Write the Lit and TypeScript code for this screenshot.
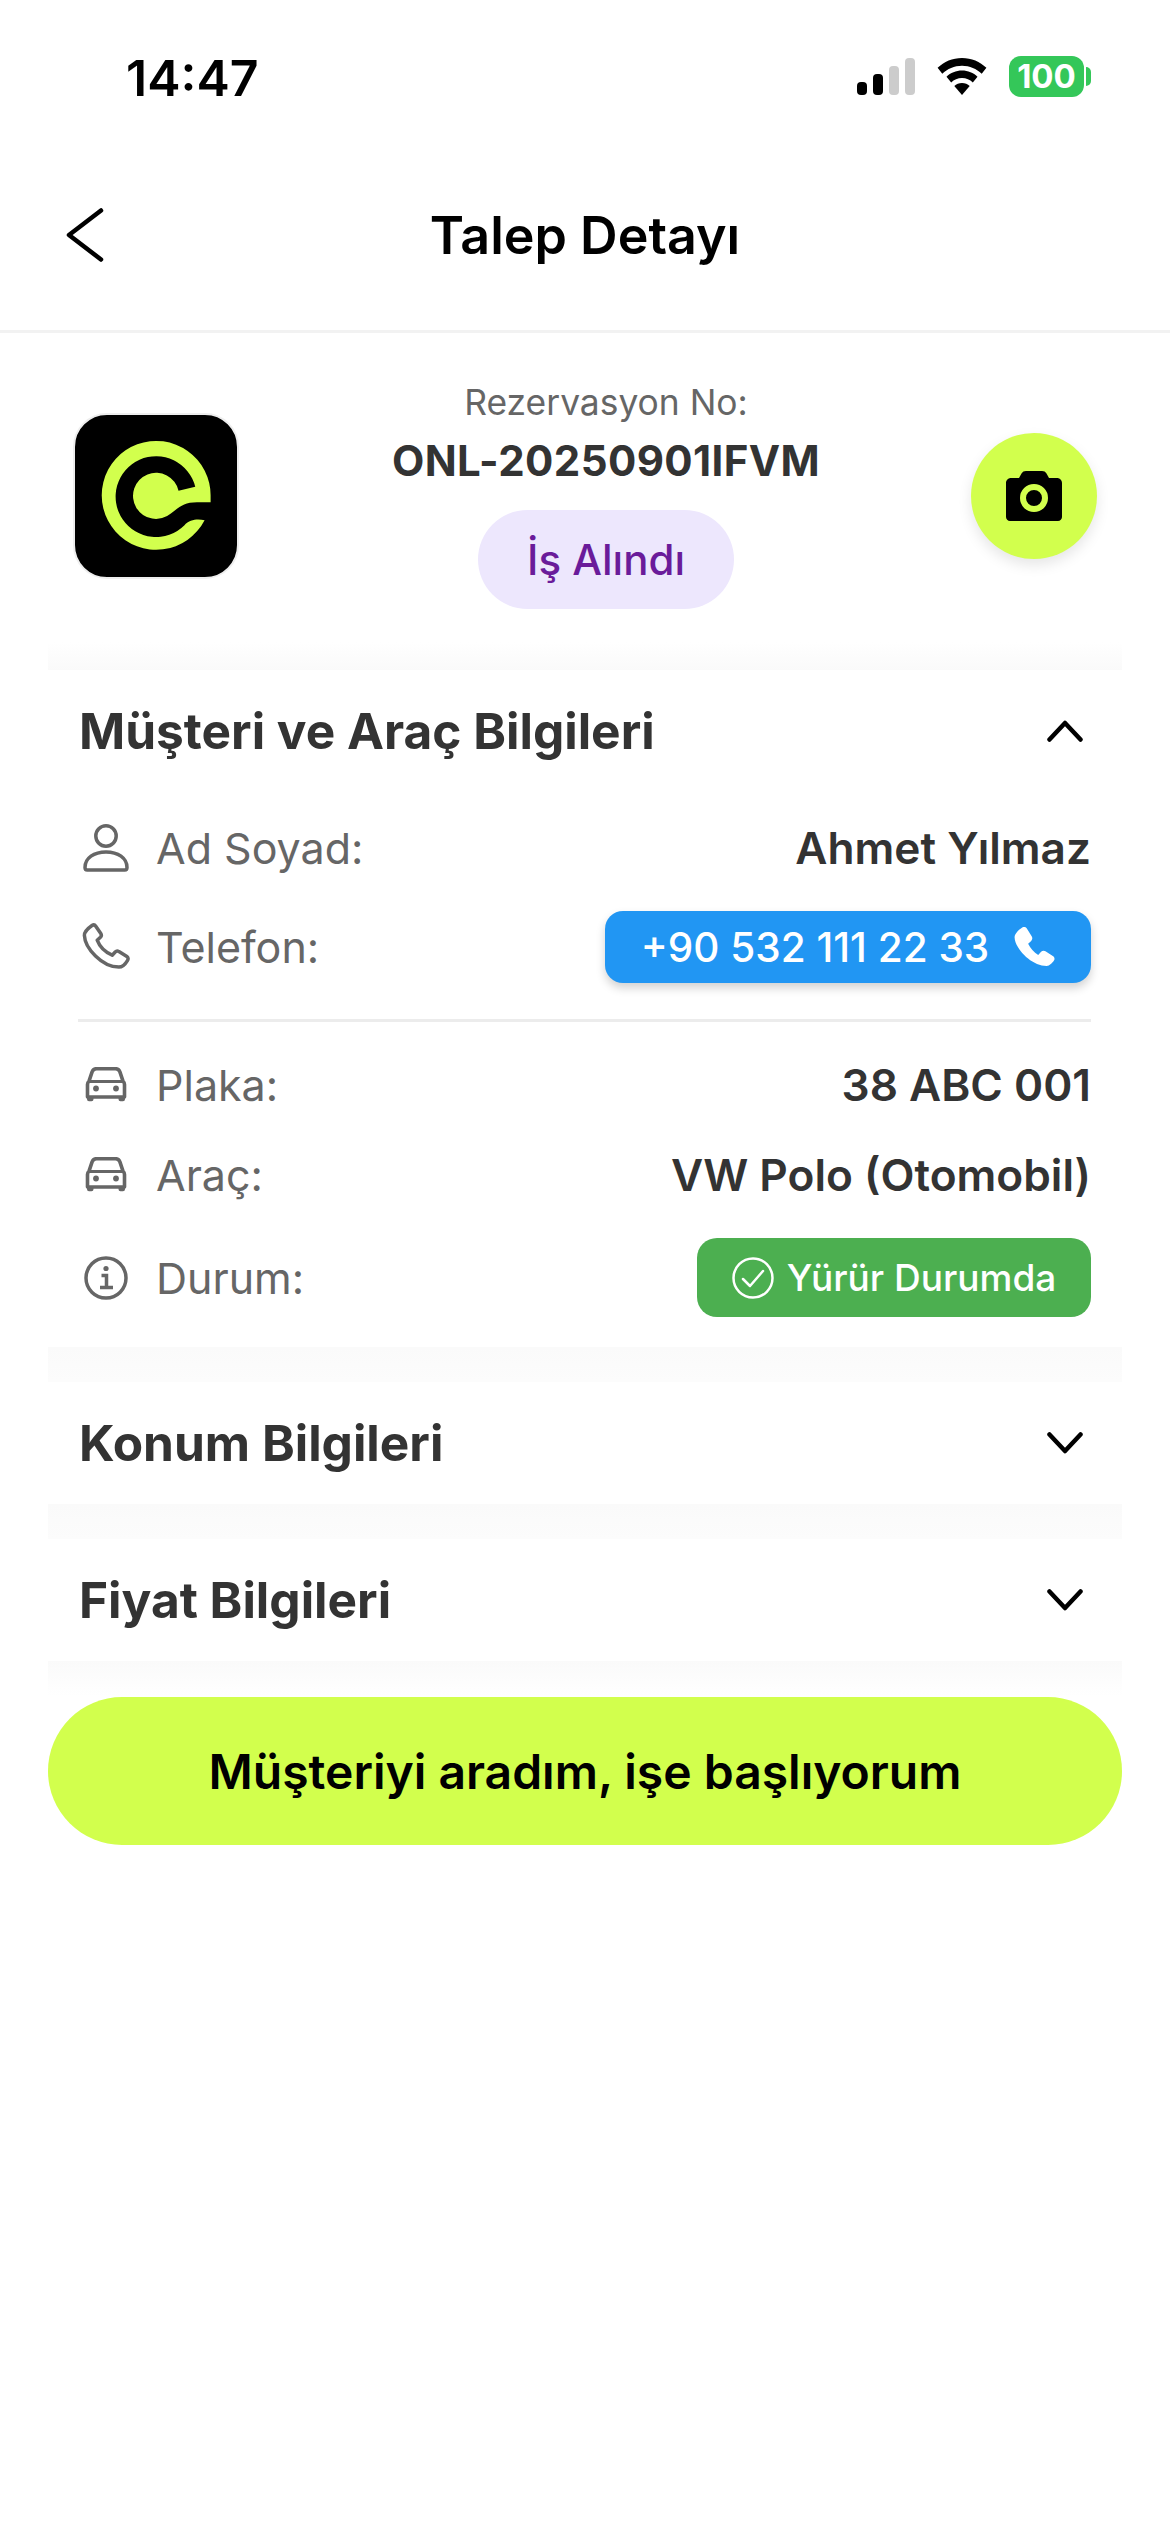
import { LitElement, html, css } from "lit";
import { customElement } from "lit/decorators.js";

const car = html`<svg class="ic" viewBox="0 0 42 36" width="42" height="36" fill="none"><path d="M2.500 30V17.500c0-1.600.6-2.600 1.600-3.600l3-9C7.900 2.900 9.300 1.700 11.500 1.700h19c2.200 0 3.600 1.200 4.400 3.200l3 9c1 1 1.600 2 1.600 3.600V30H2.500Z" stroke="#666" stroke-width="3.600" stroke-linejoin="round"/><path d="M4 14.500h34" stroke="#666" stroke-width="3"/><circle cx="11" cy="21.500" r="2.900" fill="#666"/><circle cx="31" cy="21.500" r="2.900" fill="#666"/><path d="M2 29h6.500v3.200a2 2 0 0 1-2 2H4a2 2 0 0 1-2-2ZM33.500 29H40v3.200a2 2 0 0 1-2 2h-2.500a2 2 0 0 1-2-2Z" fill="#666"/></svg>`;

const chevron = (up: boolean) => html`<svg class="chev" viewBox="0 0 36 22" width="36" height="22" fill="none"><path d="${up ? "M2.500 19.500 18 3l15.500 16.500" : "M2.500 2.500 18 19 33.500 2.500"}" stroke="#000" stroke-width="4.500" stroke-linecap="round" stroke-linejoin="round"/></svg>`;

@customElement("app-root")
export class AppRoot extends LitElement {
  static styles = css`
    :host { display: block; width: 1170px; min-height: 2532px; background: #fff; font-family: Inter, "Noto Sans", sans-serif; color: #333; }
    .status { height: 150px; box-sizing: border-box; padding: 54px 79px 0 126px; display: flex; justify-content: space-between; align-items: flex-start; }
    .time { font-size: 50px; font-weight: 600; color: #000; line-height: 48px; }
    .sys { display: flex; align-items: flex-start; margin-top: 2px; }
    .signal { margin-top: 2px; margin-right: 22px; }
    .wifi { margin-top: 2px; margin-right: 22px; }
    .bat { width: 75px; height: 41px; background: #34c759; border-radius: 12px; color: #fff; font-size: 33px; font-weight: 700; display: flex; align-items: center; justify-content: center; line-height: 1; }
    .nub { width: 5px; height: 19px; background: #34c759; border-radius: 0 5px 5px 0; margin: 11px 0 0 2px; }
    .header { height: 180px; border-bottom: 3px solid #f2f2f2; display: grid; grid-template-columns: 1fr auto 1fr; align-items: center; padding: 0 66px; }
    .title { font-size: 52px; font-weight: 600; color: #000; margin-bottom: 10px; }
    .back { display: block; margin-bottom: 10px; }
    .summary { height: 309px; box-sizing: border-box; padding: 0 73px; display: flex; align-items: flex-start; }
    .logo { width: 166px; height: 166px; margin-top: 80px; box-sizing: border-box; border: 2px solid #eee; border-radius: 34px; flex: none; background: #000; overflow: hidden; }
    .logo svg { display: block; }
    .mid { flex: 1; display: flex; flex-direction: column; align-items: center; padding-top: 50px; margin-left: 29px; margin-right: 27px; }
    .rez { font-size: 35.4px; color: #666; line-height: 40px; }
    .no { font-size: 42px; font-weight: 700; color: #333; line-height: 50px; margin-top: 13px; letter-spacing: 0.4px; white-space: nowrap; }
    .pill { margin-top: 24px; width: 256px; height: 99px; border-radius: 50px; background: #ede7fd; color: #6a1b9a; font-size: 42px; font-weight: 500; display: flex; align-items: center; justify-content: center; }
    .cam { width: 126px; height: 126px; border-radius: 50%; background: #d2ff4d; margin-top: 100px; flex: none; display: flex; align-items: center; justify-content: center; box-shadow: 0 6px 14px rgba(0,0,0,.1); }
    .band { margin: 0 48px; height: 35px; background: linear-gradient(#fafafa, #fcfcfc); }
    .band.top { height: 28px; background: linear-gradient(#ffffff, #fafafa); }
    .band.last { background: linear-gradient(#fafafa, #ffffff); }
    .section { margin: 0 48px; padding: 0 31px; }
    .sec-head { height: 122px; display: flex; align-items: center; justify-content: space-between; }
    .sec-title { font-size: 49.6px; font-weight: 650; color: #333; }
    .chev { margin-right: 8px; display: block; }
    .details { padding: 20px 0 30px; display: flex; flex-direction: column; }
    .row { display: flex; align-items: center; justify-content: space-between; }
    .label { display: flex; align-items: center; font-size: 43px; color: #666; }
    .icbox { width: 48px; display: flex; justify-content: center; margin-left: 3px; margin-right: 26px; }
    .val { font-size: 44.2px; font-weight: 570; color: #333; white-space: nowrap; }
    .r1 { height: 72px; }
    .r2 { height: 72px; margin-top: 27px; }
    .r3 { height: 60px; margin-top: 33px; }
    .r4 { height: 60px; margin-top: 30px; }
    .r5 { height: 79px; margin-top: 33px; }
    .divider { height: 3px; background: #ececec; margin: 36px 0 0 -1px; }
    .tel { width: 486px; height: 72px; box-sizing: border-box; border-radius: 18px; background: #2196f3; color: #fff; font-size: 40.500px; font-weight: 500; display: flex; align-items: center; justify-content: center; gap: 24px; box-shadow: 0 5px 10px rgba(0,0,0,.18); }
    .chip { width: 394px; height: 79px; border-radius: 20px; background: #4caf50; color: #fff; font-size: 37px; font-weight: 500; display: flex; align-items: center; justify-content: center; gap: 13px; }
    .cta { margin: 1px 48px 0; height: 148px; border-radius: 74px; background: #d2ff4d; color: #000; font-size: 48px; font-weight: 600; display: flex; align-items: center; justify-content: center; }
  `;

  render() {
    return html`
      <div class="status">
        <div class="time">14:47</div>
        <div class="sys">
          <svg class="signal" width="58" height="37" viewBox="0 0 58 37">
            <rect x="0" y="24" width="10" height="13" rx="4" fill="#000"/>
            <rect x="16" y="16" width="10" height="21" rx="4" fill="#000"/>
            <rect x="32" y="8" width="10" height="29" rx="4" fill="#ccc"/>
            <rect x="48" y="0" width="10" height="37" rx="4" fill="#ccc"/>
          </svg>
          <svg class="wifi" width="50" height="37" viewBox="0 0 50 37">
            <path d="M25 0C15.500 0 7 3.700.6 9.800l4.700 5.900C10.400 10.700 17.300 7.700 25 7.700s14.600 3 19.700 8l4.700-5.900C43 3.700 34.500 0 25 0Z" fill="#000"/>
            <path d="M25 12.500c-6 0-11.400 2.300-15.500 6.200l4.700 5.800c2.800-2.700 6.600-4.400 10.800-4.400s8 1.700 10.800 4.400l4.700-5.800C36.400 14.800 31 12.500 25 12.500Z" fill="#000"/>
            <path d="M25 25c-3 0-5.700 1.100-7.700 3L25 37l7.700-9c-2-1.900-4.700-3-7.700-3Z" fill="#000"/>
          </svg>
          <div class="bat">100</div>
          <div class="nub"></div>
        </div>
      </div>
      <div class="header">
        <svg class="back" width="38" height="54" viewBox="0 0 38 54" fill="none"><path d="M35 2.500 3 27l32 24.500" stroke="#000" stroke-width="4.500" stroke-linecap="round" stroke-linejoin="round"/></svg>
        <div class="title">Talep Detayı</div>
        <div></div>
      </div>
      <div class="summary">
        <div class="logo">
          <svg width="162" height="162" viewBox="105 135 485 485"><path fill="#d2ff4d" d="M511 396V378A163 163 0 1 0 493 450C475 447 450 445 432 466A121 121 0 1 1 465 350L415 362A69 69 0 1 0 392 430C415 412 430 396 470 396Z"/></svg>
        </div>
        <div class="mid">
          <div class="rez">Rezervasyon No:</div>
          <div class="no">ONL-20250901IFVM</div>
          <div class="pill">İş Alındı</div>
        </div>
        <div class="cam">
          <svg width="56" height="50" viewBox="0 0 56 50"><path fill="#000" d="M20 0h16c2 0 3.500.8 4.500 2.500L43 7h8c2.800 0 5 2.200 5 5v34c0 2.200-1.800 4-4 4H4c-2.200 0-4-1.800-4-4V12c0-2.800 2.200-5 5-5h8l2.500-4.500C16.500.8 18 0 20 0Z"/><circle cx="28" cy="27" r="11" fill="none" stroke="#d2ff4d" stroke-width="6"/></svg>
        </div>
      </div>
      <div class="band top"></div>
      <div class="section">
        <div class="sec-head"><div class="sec-title">Müşteri ve Araç Bilgileri</div>${chevron(true)}</div>
        <div class="details">
          <div class="row r1">
            <div class="label"><span class="icbox"><svg width="46" height="48" viewBox="0 0 46 48" fill="none" stroke="#666" stroke-width="3.500" stroke-linejoin="round"><circle cx="23" cy="12" r="10.200"/><path d="M2 43.500C2 34 11 28 23 28s21 6 21 15.500c0 1.500-.8 2.500-2.200 2.500H4.200C2.800 46 2 45 2 43.500Z"/></svg></span>Ad Soyad:</div>
            <div class="val">Ahmet Yılmaz</div>
          </div>
          <div class="row r2">
            <div class="label"><span class="icbox"><svg width="48" height="48" viewBox="0 0 48 48" fill="none" stroke="#666" stroke-width="3.500" stroke-linejoin="round"><path d="M10 2.500c1.300-.9 2.900-.6 3.800.7l5 7.300c.8 1.200.6 2.700-.4 3.700l-3.200 3c2.500 6.600 8 12 15 15l3-3.200c1-1 2.500-1.200 3.700-.4l8 5c1.300.8 1.500 2.500.7 3.700-1.800 3-4.600 6.800-8.700 6.800C20 44.100 2.900 25 2.400 12.500 2.300 8.500 6.400 5 10 2.500Z"/></svg></span>Telefon:</div>
            <div class="tel"><span>+90 532 111 22 33</span><svg width="42" height="46" viewBox="0 0 48 48"><path fill="#fff" d="M11 1.500c2-1 4-.4 5 1.500l5.500 9c1 1.700.7 3.600-.7 5l-3.500 3.300c2.500 5.200 6.600 9.800 11.500 12.700l3.300-3.500c1.400-1.400 3.400-1.700 5-.7l8.400 5.400c2 1.200 2.500 3.500 1.300 5.300-1.800 2.700-5 6.200-8.300 6.200C21 45.700 2.200 26 1.800 12.800 1.700 8.700 7.200 3.800 11 1.500Z"/></svg></div>
          </div>
          <div class="divider"></div>
          <div class="row r3">
            <div class="label"><span class="icbox">${car}</span>Plaka:</div>
            <div class="val">38 ABC 001</div>
          </div>
          <div class="row r4">
            <div class="label"><span class="icbox">${car}</span>Araç:</div>
            <div class="val">VW Polo (Otomobil)</div>
          </div>
          <div class="row r5">
            <div class="label"><span class="icbox"><svg width="44" height="44" viewBox="0 0 44 44" fill="none"><circle cx="22" cy="22" r="20" stroke="#666" stroke-width="3.500"/><circle cx="22" cy="12.500" r="2.600" fill="#666"/><path d="M17.500 19.500H22.500V31M16 31.500h13" stroke="#666" stroke-width="3.500"/></svg></span>Durum:</div>
            <div class="chip"><svg width="42" height="42" viewBox="0 0 42 42" fill="none" stroke="#fff" stroke-width="2.500"><circle cx="21" cy="21" r="19.500"/><path d="M11 22l7 7 13-15" stroke-linecap="round" stroke-linejoin="round"/></svg><span>Yürür Durumda</span></div>
          </div>
        </div>
      </div>
      <div class="band"></div>
      <div class="section"><div class="sec-head"><div class="sec-title">Konum Bilgileri</div>${chevron(false)}</div></div>
      <div class="band"></div>
      <div class="section"><div class="sec-head"><div class="sec-title">Fiyat Bilgileri</div>${chevron(false)}</div></div>
      <div class="band last"></div>
      <div class="cta">Müşteriyi aradım, işe başlıyorum</div>
    `;
  }
}
